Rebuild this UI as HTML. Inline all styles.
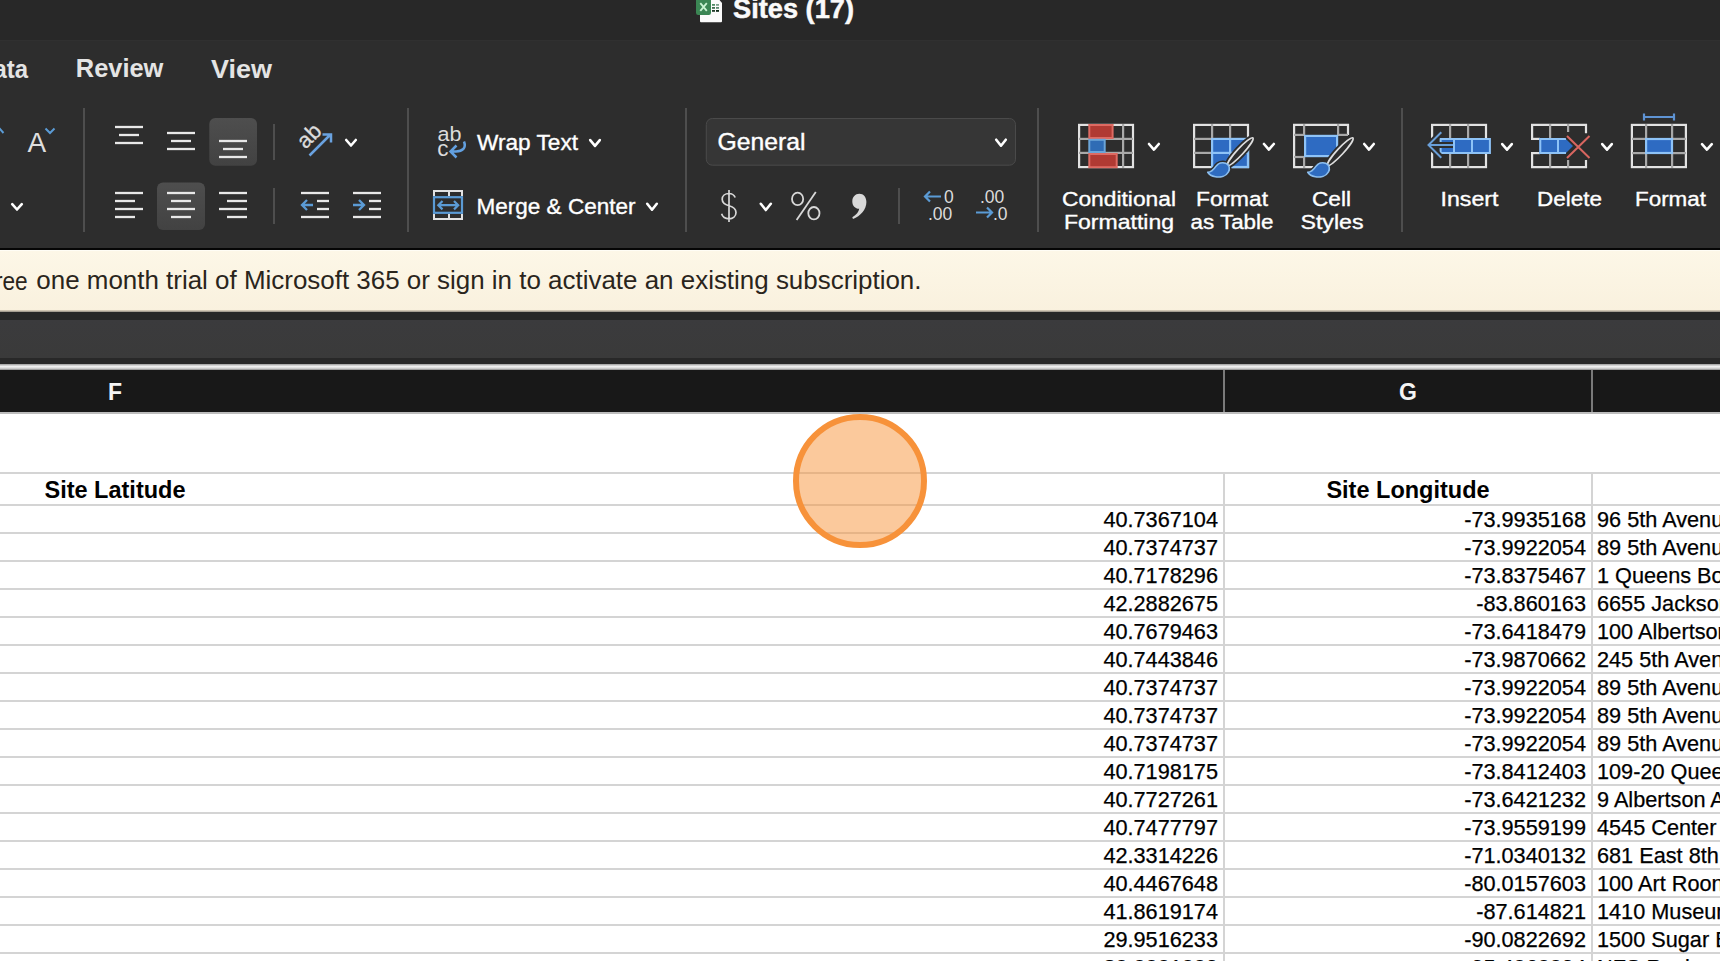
<!DOCTYPE html>
<html><head><meta charset="utf-8"><style>
*{margin:0;padding:0;box-sizing:border-box}
html,body{width:1720px;height:961px;overflow:hidden;background:#fff;font-family:"Liberation Sans",sans-serif}
body{position:relative}
div,span{position:absolute}
#title{left:0;top:0;width:1720px;height:40px;background:#282828}
#ribbon{left:0;top:40px;width:1720px;height:208px;background:#2d2d2d;border-top:1px solid #303030}
#blk{left:0;top:248px;width:1720px;height:2px;background:#050505}
#msg{left:0;top:250px;width:1720px;height:61px;background:linear-gradient(#fdf7e7,#f9f1de);border-top:1px solid #fffdf5}
.msgtxt{top:17.2px;font-size:26px;line-height:1;color:#2a251c;white-space:nowrap}
#msgline{left:0;top:310px;width:1720px;height:2px;background:linear-gradient(#e3d9c3,#8f8b82)}
#fbar-top{left:0;top:312px;width:1720px;height:8px;background:#262828}
#fbar{left:0;top:320px;width:1720px;height:38px;background:linear-gradient(#3b3b3d,#3a3a3a)}
#fbar-bot{left:0;top:358px;width:1720px;height:6px;background:#282828}
#hdr-line{left:0;top:364px;width:1720px;height:6px;background:linear-gradient(#9a9a9a,#f0f0f0 40%,#d8d8d8 70%,#888)}
#colhdr{left:0;top:370px;width:1720px;height:42px;background:#181818}
.ch{top:0;height:42px;line-height:44px;text-align:center;color:#f4f4f4;font-size:23px;font-weight:bold}
.vsep{top:370px;width:2px;height:42px;background:#7a7a7a}
#hdr-bot{left:0;top:412px;width:1720px;height:2px;background:#bdbdbd}
#grid{left:0;top:0;width:1720px;height:961px}
.hl{left:0;width:1720px;height:2px;background:#d4d4d4}
.vl{top:474px;width:2px;height:487px;background:#d4d4d4}
.bold{top:474px;height:30px;line-height:33px;text-align:center;font-weight:bold;font-size:23.5px;color:#000}
.num,.txt{height:26px;line-height:30px;font-size:21.7px;color:#000;white-space:nowrap;-webkit-text-stroke:0.25px #000}
#circle{left:793px;top:414px;width:134px;height:134px;border-radius:50%;border:6.5px solid #f7923a;background:rgba(247,147,58,0.5)}

</style></head><body>
<div id="title"></div>
<div id="ribbon"></div>
<svg id="rib" width="1720" height="250" viewBox="0 0 1720 250" style="position:absolute;left:0;top:0;font-family:'Liberation Sans',sans-serif"><path d="M700 0 H719.5 L722 3 V21.2 Q722 22.2 721 22.2 H701 Q700 22.2 700 21.2 Z" fill="#fbfbfb"/><rect x="712" y="4" width="3" height="1.8" fill="#4f8a64"/><rect x="712" y="7" width="3" height="1.8" fill="#3f6d4f"/><rect x="712" y="10" width="3" height="1.8" fill="#1f3a28"/><rect x="716" y="4" width="3" height="1.8" fill="#7aa08a"/><rect x="716" y="7" width="3" height="1.8" fill="#5d8a70"/><rect x="716" y="10" width="3" height="1.8" fill="#0f2a18"/><rect x="696" y="-3" width="15" height="18" rx="2.2" fill="#3b8654"/><path d="M700.3 3.2 L706.8 10.9 M706.8 3.2 L700.3 10.9" stroke="#c9f3d2" stroke-width="1.8"/><text x="733" y="18" font-size="27" font-weight="bold" fill="#fafafa" stroke="#fafafa" stroke-width="0.5" textLength="121" lengthAdjust="spacingAndGlyphs" text-anchor="start" >Sites (17)</text><text x="-6.5" y="77.5" font-size="26.5" font-weight="bold" fill="#e4e4e4" textLength="34.5" lengthAdjust="spacingAndGlyphs" text-anchor="start" >ata</text><text x="75.8" y="77.3" font-size="26.5" font-weight="bold" fill="#e4e4e4" textLength="87.6" lengthAdjust="spacingAndGlyphs" text-anchor="start" >Review</text><text x="211" y="77.5" font-size="26.5" font-weight="bold" fill="#e4e4e4" textLength="61" lengthAdjust="spacingAndGlyphs" text-anchor="start" >View</text><polyline points="-5,133 -0.5,128.5 3.5,133" fill="none" stroke="#5b9bd5" stroke-width="2"/><text x="27.5" y="152" font-size="28" font-weight="normal" fill="#dedede" text-anchor="start" >A</text><polyline points="45.5,128.5 50,133 54.5,128.5" fill="none" stroke="#5b9bd5" stroke-width="2"/><polyline points="12.2,204.10000000000002 17.0,209.5 21.8,204.10000000000002" fill="none" stroke="#ffffff" stroke-width="2.6" stroke-linecap="round" stroke-linejoin="round"/><rect x="83" y="108" width="2" height="124" fill="#4e4e4e"/><defs><linearGradient id="selg" x1="0" y1="0" x2="0" y2="1"><stop offset="0" stop-color="#4e4e4e"/><stop offset="1" stop-color="#424242"/></linearGradient></defs><rect x="209.3" y="118" width="47.7" height="47.8" rx="6" fill="url(#selg)"/><rect x="157" y="182.4" width="48" height="47.6" rx="6" fill="url(#selg)"/><rect x="115" y="125.85" width="28" height="2.3" fill="#e8e8e8"/><rect x="119" y="133.85" width="20" height="2.3" fill="#e8e8e8"/><rect x="115" y="141.85" width="28" height="2.3" fill="#e8e8e8"/><rect x="167" y="131.85" width="28" height="2.3" fill="#e8e8e8"/><rect x="171" y="139.85" width="20" height="2.3" fill="#e8e8e8"/><rect x="167" y="147.85" width="28" height="2.3" fill="#e8e8e8"/><rect x="219" y="139.85" width="28" height="2.3" fill="#e8e8e8"/><rect x="223" y="147.85" width="20" height="2.3" fill="#e8e8e8"/><rect x="219" y="155.85" width="28" height="2.3" fill="#e8e8e8"/><rect x="115" y="191.85" width="28" height="2.3" fill="#e8e8e8"/><rect x="115" y="199.85" width="20" height="2.3" fill="#e8e8e8"/><rect x="115" y="207.85" width="28" height="2.3" fill="#e8e8e8"/><rect x="115" y="215.85" width="20" height="2.3" fill="#e8e8e8"/><rect x="167" y="191.85" width="28" height="2.3" fill="#e8e8e8"/><rect x="171" y="199.85" width="20" height="2.3" fill="#e8e8e8"/><rect x="167" y="207.85" width="28" height="2.3" fill="#e8e8e8"/><rect x="171" y="215.85" width="20" height="2.3" fill="#e8e8e8"/><rect x="219" y="191.85" width="28" height="2.3" fill="#e8e8e8"/><rect x="227" y="199.85" width="20" height="2.3" fill="#e8e8e8"/><rect x="219" y="207.85" width="28" height="2.3" fill="#e8e8e8"/><rect x="227" y="215.85" width="20" height="2.3" fill="#e8e8e8"/><rect x="273" y="124" width="2" height="36" fill="#4e4e4e"/><rect x="273" y="188" width="2" height="36" fill="#4e4e4e"/><text x="0" y="0" font-size="22" fill="#dcdcdc" stroke="#dcdcdc" stroke-width="0.3" transform="translate(305.5,149.7) rotate(-45)">ab</text><path d="M309.5 155.5 L330.5 134.5 M322.5 134.5 H331 V142.5" fill="none" stroke="#6aa2e0" stroke-width="2.5"/><polyline points="346.2,140.0 351.0,145.5 355.8,140.0" fill="none" stroke="#ffffff" stroke-width="2.6" stroke-linecap="round" stroke-linejoin="round"/><rect x="301" y="191.85" width="28" height="2.3" fill="#e8e8e8"/><rect x="317" y="199.85" width="12" height="2.3" fill="#e8e8e8"/><rect x="317" y="207.85" width="12" height="2.3" fill="#e8e8e8"/><rect x="301" y="215.85" width="28" height="2.3" fill="#e8e8e8"/><path d="M313 205 H302 M307 200 L302 205 L307 210" fill="none" stroke="#5b9bd5" stroke-width="2.3" stroke-linejoin="miter"/><rect x="353" y="191.85" width="28" height="2.3" fill="#e8e8e8"/><rect x="369" y="199.85" width="12" height="2.3" fill="#e8e8e8"/><rect x="369" y="207.85" width="12" height="2.3" fill="#e8e8e8"/><rect x="353" y="215.85" width="28" height="2.3" fill="#e8e8e8"/><path d="M353 205 H364 M359 200 L364 205 L359 210" fill="none" stroke="#5b9bd5" stroke-width="2.3"/><rect x="407" y="108" width="2" height="124" fill="#4e4e4e"/><text x="437.5" y="141.3" font-size="20.5" font-weight="normal" fill="#dcdcdc" textLength="24" lengthAdjust="spacingAndGlyphs" text-anchor="start" >ab</text><text x="437.3" y="156.3" font-size="22.5" font-weight="normal" fill="#dcdcdc" text-anchor="start" >c</text><path d="M464 141.5 C466.5 148 462.5 151.5 456 151.5 H451 M456.5 145.5 L450.5 151.5 L456.5 157.5" fill="none" stroke="#62a0e0" stroke-width="2.5"/><text x="477" y="150.2" font-size="21.5" font-weight="normal" fill="#ffffff" stroke="#ffffff" stroke-width="0.35" textLength="101" lengthAdjust="spacingAndGlyphs" text-anchor="start" >Wrap Text</text><polyline points="590.2,140.10000000000002 595.0,145.89999999999998 599.8,140.10000000000002" fill="none" stroke="#ffffff" stroke-width="2.6" stroke-linecap="round" stroke-linejoin="round"/><rect x="434" y="191" width="28" height="28" fill="none" stroke="#e2e2e2" stroke-width="2"/><rect x="448" y="190" width="2" height="30" fill="#e2e2e2"/><rect x="432" y="196" width="32" height="18" fill="#2d2d2d"/><rect x="434" y="197.2" width="28" height="15.6" fill="none" stroke="#5b9bd5" stroke-width="2.2"/><path d="M438.5 205.2 H458 M442.5 201 L438.3 205.2 L442.5 209.4 M454 201 L458.2 205.2 L454 209.4" fill="none" stroke="#5b9bd5" stroke-width="2.2"/><text x="476.5" y="214.2" font-size="21.5" font-weight="normal" fill="#ffffff" stroke="#ffffff" stroke-width="0.35" textLength="159" lengthAdjust="spacingAndGlyphs" text-anchor="start" >Merge &amp; Center</text><polyline points="647.2,203.8 652.0,209.7 656.8,203.8" fill="none" stroke="#ffffff" stroke-width="2.6" stroke-linecap="round" stroke-linejoin="round"/><rect x="685" y="108" width="2" height="124" fill="#4e4e4e"/><rect x="706.3" y="118.5" width="309.2" height="46.7" rx="6" fill="#363636" stroke="#4a4a4a" stroke-width="1"/><text x="717.5" y="150.2" font-size="24.5" font-weight="normal" fill="#ffffff" stroke="#ffffff" stroke-width="0.4" textLength="88" lengthAdjust="spacingAndGlyphs" text-anchor="start" >General</text><polyline points="996.2,139.70000000000002 1001.0,145.7 1005.8,139.70000000000002" fill="none" stroke="#ffffff" stroke-width="2.6" stroke-linecap="round" stroke-linejoin="round"/><path d="M735.2 197.5 C734 194.8 731.8 193.5 729 193.5 C725 193.5 722.2 196 722.2 199.3 C722.2 203.3 725.5 204.8 729 205.8 C733 206.9 736 208.5 736 212.6 C736 216.5 732.8 218.8 729 218.8 C725.2 218.8 722.5 216.8 721.6 213.8 M729 190 V222" fill="none" stroke="#d8d8d8" stroke-width="1.7"/><polyline points="760.8000000000001,203.8 765.8,210.0 770.8,203.8" fill="none" stroke="#ffffff" stroke-width="2.6" stroke-linecap="round" stroke-linejoin="round"/><ellipse cx="797.6" cy="198.9" rx="5.6" ry="6.2" fill="none" stroke="#d8d8d8" stroke-width="1.8"/><ellipse cx="813.9" cy="213.2" rx="5.6" ry="6.2" fill="none" stroke="#d8d8d8" stroke-width="1.8"/><path d="M815.8 192 L796.6 220" stroke="#d8d8d8" stroke-width="1.8"/><path d="M859.3 193.8 C863.6 193.8 866.4 197.2 866.4 202 C866.4 209.5 860.5 216 853 219 L852.3 217.2 C856.5 214.8 858.8 211.8 859.2 208.8 C855.2 208.8 852.3 205.8 852.3 201.5 C852.3 197 855.3 193.8 859.3 193.8 Z" fill="#d8d8d8"/><rect x="898" y="188" width="2" height="36" fill="#4e4e4e"/><path d="M941 196.5 H925 M930 191.5 L925 196.5 L930 201.5" fill="none" stroke="#5b9bd5" stroke-width="2.2"/><text x="944" y="203" font-size="17.5" font-weight="normal" fill="#dcdcdc" text-anchor="start" >0</text><text x="928" y="219.5" font-size="17.5" font-weight="normal" fill="#dcdcdc" text-anchor="start" >.00</text><text x="980" y="203" font-size="17.5" font-weight="normal" fill="#dcdcdc" text-anchor="start" >.00</text><path d="M976 212.5 H992 M987 207.5 L992 212.5 L987 217.5" fill="none" stroke="#5b9bd5" stroke-width="2.2"/><text x="993" y="219.5" font-size="17.5" font-weight="normal" fill="#dcdcdc" text-anchor="start" >.0</text><rect x="1037" y="108" width="2" height="124" fill="#4e4e4e"/><rect x="1079.1" y="124.9" width="53.9" height="42.2" fill="none" stroke="#e2e2e2" stroke-width="2.2"/><rect x="1079" y="137.8" width="54" height="2.2" fill="#a9a9a9"/><rect x="1079" y="151.8" width="54" height="2.2" fill="#a9a9a9"/><rect x="1122" y="124" width="2.2" height="44" fill="#a9a9a9"/><rect x="1089.3" y="125" width="23.3" height="13" fill="#b03a33" stroke="#de6a62" stroke-width="2"/><rect x="1089.3" y="139.8" width="15.4" height="12.2" fill="#2f6cb5" stroke="#6ba5d8" stroke-width="2"/><rect x="1089.3" y="154" width="27.4" height="13.2" fill="#b03a33" stroke="#de6a62" stroke-width="2"/><polyline points="1149.0,144.0 1153.9,149.6 1158.8,144.0" fill="none" stroke="#ffffff" stroke-width="2.6" stroke-linecap="round" stroke-linejoin="round"/><text x="1062" y="205.5" font-size="20.5" font-weight="normal" fill="#ffffff" stroke="#ffffff" stroke-width="0.35" textLength="114" lengthAdjust="spacingAndGlyphs" text-anchor="start" >Conditional</text><text x="1064" y="229.2" font-size="20.5" font-weight="normal" fill="#ffffff" stroke="#ffffff" stroke-width="0.35" textLength="110" lengthAdjust="spacingAndGlyphs" text-anchor="start" >Formatting</text><rect x="1212" y="138.8" width="37" height="29.3" fill="#2e6bc2"/><rect x="1194.1" y="124.9" width="53.9" height="42.2" fill="none" stroke="#e2e2e2" stroke-width="2.2"/><rect x="1194" y="137.8" width="18" height="2.2" fill="#a9a9a9"/><rect x="1194" y="151.8" width="18" height="2.2" fill="#a9a9a9"/><rect x="1212" y="137.8" width="36" height="2.2" fill="#8ec3f7"/><rect x="1212" y="151.8" width="36" height="2.2" fill="#8ec3f7"/><rect x="1211" y="124" width="2.2" height="15" fill="#a9a9a9"/><rect x="1229" y="124" width="2.2" height="15" fill="#a9a9a9"/><rect x="1211" y="138" width="2.2" height="30" fill="#8ec3f7"/><rect x="1229" y="138" width="2.2" height="30" fill="#8ec3f7"/><rect x="1247" y="138" width="2.2" height="30" fill="#8ec3f7"/><rect x="1212" y="165.9" width="37" height="2.2" fill="#8ec3f7"/><g transform="translate(0,0)"><ellipse cx="0" cy="0" rx="19" ry="3.4" transform="translate(1240.3 151.6) rotate(-47.5)" fill="#2d2d2d" stroke="#2d2d2d" stroke-width="5"/><path d="M1206.5 172.5 C1211 172.5 1213.5 169 1215.5 166 C1218 162.5 1222.5 161 1226.5 162.5 C1230.5 164 1231.5 168.5 1229.5 172 C1227 176.5 1221 178.5 1215 177.5 C1211 177 1208 175 1206.5 172.5 Z" transform="translate(1219 170) scale(0.9) translate(-1219 -170)" fill="#2d2d2d" stroke="#2d2d2d" stroke-width="5" stroke-linejoin="round"/><ellipse cx="0" cy="0" rx="18.6" ry="3.2" transform="translate(1240.3 151.6) rotate(-47.5)" fill="#2d2d2d" stroke="#dedede" stroke-width="1.7"/><path d="M1206.5 172.5 C1211 172.5 1213.5 169 1215.5 166 C1218 162.5 1222.5 161 1226.5 162.5 C1230.5 164 1231.5 168.5 1229.5 172 C1227 176.5 1221 178.5 1215 177.5 C1211 177 1208 175 1206.5 172.5 Z" transform="translate(1219 170) scale(0.9) translate(-1219 -170)" fill="#2f6cc0" stroke="#8cbff0" stroke-width="1.8" stroke-linejoin="round"/></g><polyline points="1264.0,144.0 1268.9,149.6 1273.8,144.0" fill="none" stroke="#ffffff" stroke-width="2.6" stroke-linecap="round" stroke-linejoin="round"/><text x="1196" y="205.5" font-size="20.5" font-weight="normal" fill="#ffffff" stroke="#ffffff" stroke-width="0.35" textLength="72" lengthAdjust="spacingAndGlyphs" text-anchor="start" >Format</text><text x="1190.5" y="229.2" font-size="20.5" font-weight="normal" fill="#ffffff" stroke="#ffffff" stroke-width="0.35" textLength="83" lengthAdjust="spacingAndGlyphs" text-anchor="start" >as Table</text><path d="M1348 135 V124.9 H1294.1 V167.1 H1314" fill="none" stroke="#e2e2e2" stroke-width="2.2"/><rect x="1294" y="133.8" width="10" height="2.2" fill="#a9a9a9"/><rect x="1338" y="133.8" width="10" height="2.2" fill="#a9a9a9"/><rect x="1294" y="155.9" width="10" height="2.2" fill="#a9a9a9"/><rect x="1303" y="124" width="2.2" height="11" fill="#a9a9a9"/><rect x="1337" y="124" width="2.2" height="11" fill="#a9a9a9"/><rect x="1303" y="157" width="2.2" height="11" fill="#a9a9a9"/><rect x="1305.1" y="135.9" width="32" height="20.2" fill="#2e6bc2" stroke="#8ec3f7" stroke-width="2.2"/><g transform="translate(100,0)"><ellipse cx="0" cy="0" rx="19" ry="3.4" transform="translate(1240.3 151.6) rotate(-47.5)" fill="#2d2d2d" stroke="#2d2d2d" stroke-width="5"/><path d="M1206.5 172.5 C1211 172.5 1213.5 169 1215.5 166 C1218 162.5 1222.5 161 1226.5 162.5 C1230.5 164 1231.5 168.5 1229.5 172 C1227 176.5 1221 178.5 1215 177.5 C1211 177 1208 175 1206.5 172.5 Z" transform="translate(1219 170) scale(0.9) translate(-1219 -170)" fill="#2d2d2d" stroke="#2d2d2d" stroke-width="5" stroke-linejoin="round"/><ellipse cx="0" cy="0" rx="18.6" ry="3.2" transform="translate(1240.3 151.6) rotate(-47.5)" fill="#2d2d2d" stroke="#dedede" stroke-width="1.7"/><path d="M1206.5 172.5 C1211 172.5 1213.5 169 1215.5 166 C1218 162.5 1222.5 161 1226.5 162.5 C1230.5 164 1231.5 168.5 1229.5 172 C1227 176.5 1221 178.5 1215 177.5 C1211 177 1208 175 1206.5 172.5 Z" transform="translate(1219 170) scale(0.9) translate(-1219 -170)" fill="#2f6cc0" stroke="#8cbff0" stroke-width="1.8" stroke-linejoin="round"/></g><polyline points="1364.2,144.0 1369.0,149.6 1373.8,144.0" fill="none" stroke="#ffffff" stroke-width="2.6" stroke-linecap="round" stroke-linejoin="round"/><text x="1312" y="205.5" font-size="20.5" font-weight="normal" fill="#ffffff" stroke="#ffffff" stroke-width="0.35" textLength="39" lengthAdjust="spacingAndGlyphs" text-anchor="start" >Cell</text><text x="1300.5" y="229.2" font-size="20.5" font-weight="normal" fill="#ffffff" stroke="#ffffff" stroke-width="0.35" textLength="63" lengthAdjust="spacingAndGlyphs" text-anchor="start" >Styles</text><rect x="1401" y="108" width="2" height="124" fill="#4e4e4e"/><rect x="1432.1" y="124.9" width="53.9" height="42.2" fill="none" stroke="#e2e2e2" stroke-width="2.2"/><rect x="1449" y="124" width="2.2" height="44" fill="#a9a9a9"/><rect x="1467" y="124" width="2.2" height="44" fill="#a9a9a9"/><path d="M1440.6 138.9 H1489.9 V153.1 H1440.6 L1440.6 153.1 Z" fill="#2e6bc2" stroke="#8ec3f7" stroke-width="2"/><rect x="1453" y="139" width="2" height="14" fill="#8ec3f7"/><rect x="1471" y="139" width="2" height="14" fill="#8ec3f7"/><path d="M1453 145 H1428.5 M1441.3 132.3 L1428.5 145 L1441.3 157.7" fill="none" stroke="#2d2d2d" stroke-width="6"/><path d="M1453 145 H1428.5 M1441.3 132.3 L1428.5 145 L1441.3 157.7" fill="none" stroke="#6a9fd8" stroke-width="2"/><polyline points="1502.2,144.10000000000002 1507.0,149.7 1511.8,144.10000000000002" fill="none" stroke="#ffffff" stroke-width="2.6" stroke-linecap="round" stroke-linejoin="round"/><text x="1440.5" y="206" font-size="20.5" font-weight="normal" fill="#ffffff" stroke="#ffffff" stroke-width="0.35" textLength="58" lengthAdjust="spacingAndGlyphs" text-anchor="start" >Insert</text><path d="M1532.1 139 V124.9 H1586 V133.3 M1586 160 V167.1 H1532.1 V153" fill="none" stroke="#e2e2e2" stroke-width="2.2"/><rect x="1531" y="137.8" width="9" height="2.2" fill="#e2e2e2"/><rect x="1531" y="152.0" width="9" height="2.2" fill="#e2e2e2"/><rect x="1549" y="124" width="2.2" height="15" fill="#a9a9a9"/><rect x="1549" y="153" width="2.2" height="15" fill="#a9a9a9"/><rect x="1567" y="124" width="2.2" height="8" fill="#a9a9a9"/><rect x="1567" y="160" width="2.2" height="8" fill="#a9a9a9"/><path d="M1539.3 137.9 H1565 L1573 146 L1565 154.1 H1539.3 Z" fill="#2e6bc2"/><path d="M1566 138.9 H1540.3 V153.1 H1566" fill="none" stroke="#8ec3f7" stroke-width="2"/><rect x="1557" y="139" width="2" height="14" fill="#8ec3f7"/><path d="M1567 136 L1589.5 158 M1589.5 136 L1567 158" fill="none" stroke="#2d2d2d" stroke-width="5"/><path d="M1567 136 L1589.5 158 M1589.5 136 L1567 158" fill="none" stroke="#d96660" stroke-width="2"/><polyline points="1602.2,144.10000000000002 1607.0,149.7 1611.8,144.10000000000002" fill="none" stroke="#ffffff" stroke-width="2.6" stroke-linecap="round" stroke-linejoin="round"/><text x="1537" y="206" font-size="20.5" font-weight="normal" fill="#ffffff" stroke="#ffffff" stroke-width="0.35" textLength="65" lengthAdjust="spacingAndGlyphs" text-anchor="start" >Delete</text><rect x="1631.9" y="124.9" width="54" height="42.2" fill="none" stroke="#e2e2e2" stroke-width="2.2"/><rect x="1632" y="137.8" width="14" height="2.2" fill="#a9a9a9"/><rect x="1672" y="137.8" width="14" height="2.2" fill="#a9a9a9"/><rect x="1632" y="152.0" width="14" height="2.2" fill="#a9a9a9"/><rect x="1672" y="152.0" width="14" height="2.2" fill="#a9a9a9"/><rect x="1645" y="124" width="2.2" height="15" fill="#a9a9a9"/><rect x="1671" y="124" width="2.2" height="15" fill="#a9a9a9"/><rect x="1645" y="153" width="2.2" height="15" fill="#a9a9a9"/><rect x="1671" y="153" width="2.2" height="15" fill="#a9a9a9"/><rect x="1646.1" y="139" width="25.9" height="14" fill="#2e6bc2" stroke="#8ec3f7" stroke-width="2.2"/><path d="M1644 117 H1674 M1644 113.5 V120.5 M1674 113.5 V120.5" fill="none" stroke="#5e93d3" stroke-width="2.2"/><polyline points="1702.0,144.20000000000002 1706.9,149.6 1711.8,144.20000000000002" fill="none" stroke="#ffffff" stroke-width="2.6" stroke-linecap="round" stroke-linejoin="round"/><text x="1635" y="206" font-size="20.5" font-weight="normal" fill="#ffffff" stroke="#ffffff" stroke-width="0.35" textLength="71" lengthAdjust="spacingAndGlyphs" text-anchor="start" >Format</text></svg>
<div id="blk"></div>
<div id="msg"><span class="msgtxt" style="left:-5.5px;transform:scaleX(0.87);transform-origin:0 0">ree</span><span class="msgtxt" style="left:36.3px;font-size:25.95px">one month trial of Microsoft 365 or sign in to activate an existing subscription.</span></div>
<div id="msgline"></div>
<div id="fbar-top"></div>
<div id="fbar"></div>
<div id="fbar-bot"></div>
<div id="hdr-line"></div>
<div id="colhdr"><span class="ch" style="left:0;width:230px">F</span><span class="ch" style="left:1225px;width:366px">G</span></div>
<div class="vsep" style="left:1223px"></div>
<div class="vsep" style="left:1591px"></div>
<div id="hdr-bot"></div>
<div id="grid">
<div class="hl" style="top:472px"></div>
<div class="hl" style="top:504px"></div><div class="hl" style="top:532px"></div><div class="hl" style="top:560px"></div><div class="hl" style="top:588px"></div><div class="hl" style="top:616px"></div><div class="hl" style="top:644px"></div><div class="hl" style="top:672px"></div><div class="hl" style="top:700px"></div><div class="hl" style="top:728px"></div><div class="hl" style="top:756px"></div><div class="hl" style="top:784px"></div><div class="hl" style="top:812px"></div><div class="hl" style="top:840px"></div><div class="hl" style="top:868px"></div><div class="hl" style="top:896px"></div><div class="hl" style="top:924px"></div><div class="hl" style="top:952px"></div>
<div class="vl" style="left:1223px"></div>
<div class="vl" style="left:1591px"></div>
<div class="bold" style="left:0;width:230px">Site Latitude</div>
<div class="bold" style="left:1225px;width:366px">Site Longitude</div>
<div class="num" style="top:505px;right:502px">40.7367104</div><div class="num" style="top:505px;right:134px">-73.9935168</div><div class="txt" style="top:505px;left:1597px">96 5th Avenue</div><div class="num" style="top:533px;right:502px">40.7374737</div><div class="num" style="top:533px;right:134px">-73.9922054</div><div class="txt" style="top:533px;left:1597px">89 5th Avenue</div><div class="num" style="top:561px;right:502px">40.7178296</div><div class="num" style="top:561px;right:134px">-73.8375467</div><div class="txt" style="top:561px;left:1597px">1 Queens Boulevard</div><div class="num" style="top:589px;right:502px">42.2882675</div><div class="num" style="top:589px;right:134px">-83.860163</div><div class="txt" style="top:589px;left:1597px">6655 Jackson Road</div><div class="num" style="top:617px;right:502px">40.7679463</div><div class="num" style="top:617px;right:134px">-73.6418479</div><div class="txt" style="top:617px;left:1597px">100 Albertson Avenue</div><div class="num" style="top:645px;right:502px">40.7443846</div><div class="num" style="top:645px;right:134px">-73.9870662</div><div class="txt" style="top:645px;left:1597px">245 5th Avenue</div><div class="num" style="top:673px;right:502px">40.7374737</div><div class="num" style="top:673px;right:134px">-73.9922054</div><div class="txt" style="top:673px;left:1597px">89 5th Avenue</div><div class="num" style="top:701px;right:502px">40.7374737</div><div class="num" style="top:701px;right:134px">-73.9922054</div><div class="txt" style="top:701px;left:1597px">89 5th Avenue</div><div class="num" style="top:729px;right:502px">40.7374737</div><div class="num" style="top:729px;right:134px">-73.9922054</div><div class="txt" style="top:729px;left:1597px">89 5th Avenue</div><div class="num" style="top:757px;right:502px">40.7198175</div><div class="num" style="top:757px;right:134px">-73.8412403</div><div class="txt" style="top:757px;left:1597px">109-20 Queens Blvd</div><div class="num" style="top:785px;right:502px">40.7727261</div><div class="num" style="top:785px;right:134px">-73.6421232</div><div class="txt" style="top:785px;left:1597px">9 Albertson Avenue</div><div class="num" style="top:813px;right:502px">40.7477797</div><div class="num" style="top:813px;right:134px">-73.9559199</div><div class="txt" style="top:813px;left:1597px">4545 Center Blvd</div><div class="num" style="top:841px;right:502px">42.3314226</div><div class="num" style="top:841px;right:134px">-71.0340132</div><div class="txt" style="top:841px;left:1597px">681 East 8th Street</div><div class="num" style="top:869px;right:502px">40.4467648</div><div class="num" style="top:869px;right:134px">-80.0157603</div><div class="txt" style="top:869px;left:1597px">100 Art Rooney Ave</div><div class="num" style="top:897px;right:502px">41.8619174</div><div class="num" style="top:897px;right:134px">-87.614821</div><div class="txt" style="top:897px;left:1597px">1410 Museum Campus</div><div class="num" style="top:925px;right:502px">29.9516233</div><div class="num" style="top:925px;right:134px">-90.0822692</div><div class="txt" style="top:925px;left:1597px">1500 Sugar Bowl Dr</div><div class="num" style="top:953px;right:502px">30.0001009</div><div class="num" style="top:953px;right:134px">-95.4060094</div><div class="txt" style="top:953px;left:1597px">NFS Rocker Street</div>
</div>
<div id="circle"></div>
</body></html>
